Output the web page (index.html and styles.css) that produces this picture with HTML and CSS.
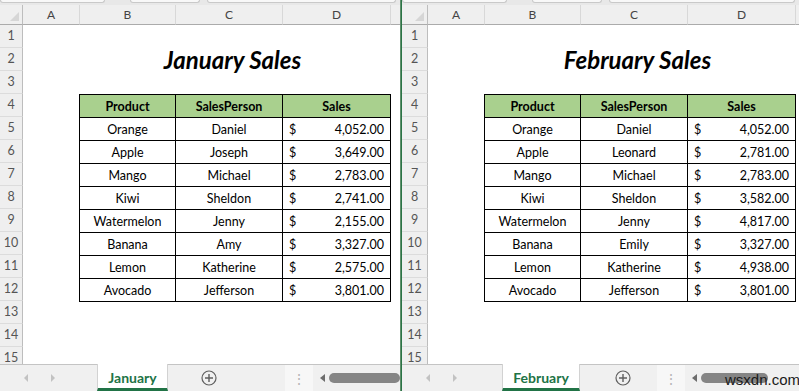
FILE: index.html
```html
<!DOCTYPE html>
<html lang="en">
  <head>
    <meta charset="UTF-8" />
    <meta name="viewport" content="width=device-width, initial-scale=1.0" />
    <title>Sales</title>
    <link rel="stylesheet" href="styles.css">
  </head>
  <body>
    <div class="screen">
      <!-- January window -->
      <section class="pane pane-left">
        <div class="topbar">
          <span class="box box-name"></span>
          <span class="box box-fx"></span>
          <span class="box box-formula"></span>
        </div>
        <div class="grid">
          <div class="ch corner"></div>
          <div class="ch">A</div>
          <div class="ch">B</div>
          <div class="ch">C</div>
          <div class="ch">D</div>
          <div class="ch ch-rest"></div>
          <div class="rn">1</div><div class="rn">2</div><div class="rn">3</div><div class="rn">4</div><div class="rn">5</div>
          <div class="rn">6</div><div class="rn">7</div><div class="rn">8</div><div class="rn">9</div><div class="rn">10</div>
          <div class="rn">11</div><div class="rn">12</div><div class="rn">13</div><div class="rn">14</div><div class="rn">15</div>
          <h1 class="title">January Sales</h1>
          <div class="table">
            <div class="th">Product</div><div class="th">SalesPerson</div><div class="th">Sales</div>
            <div class="td">Orange</div><div class="td">Daniel</div><div class="td money"><span>$</span><span>4,052.00</span></div>
            <div class="td">Apple</div><div class="td">Joseph</div><div class="td money"><span>$</span><span>3,649.00</span></div>
            <div class="td">Mango</div><div class="td">Michael</div><div class="td money"><span>$</span><span>2,783.00</span></div>
            <div class="td">Kiwi</div><div class="td">Sheldon</div><div class="td money"><span>$</span><span>2,741.00</span></div>
            <div class="td">Watermelon</div><div class="td">Jenny</div><div class="td money"><span>$</span><span>2,155.00</span></div>
            <div class="td">Banana</div><div class="td">Amy</div><div class="td money"><span>$</span><span>3,327.00</span></div>
            <div class="td">Lemon</div><div class="td">Katherine</div><div class="td money"><span>$</span><span>2,575.00</span></div>
            <div class="td">Avocado</div><div class="td">Jefferson</div><div class="td money"><span>$</span><span>3,801.00</span></div>
          </div>
        </div>
        <div class="tabbar">
          <div class="nav"><i class="tri tri-l"></i><i class="tri tri-r"></i></div>
          <div class="tab">January</div>
          <div class="add">
            <svg viewBox="0 0 16 16" width="16" height="16">
              <circle cx="8" cy="8" r="7" fill="none" stroke="#5f5f5f" stroke-width="1.2"/>
              <path d="M8 4v8M4 8h8" stroke="#5f5f5f" stroke-width="1.4"/>
            </svg>
          </div>
          <div class="dots">&#8942;</div>
          <div class="hscroll"><i class="sarrow"></i><span class="thumb"></span></div>
        </div>
      </section>

      <div class="split"></div>

      <!-- February window -->
      <section class="pane pane-right">
        <div class="topbar">
          <span class="box box-name"></span>
          <span class="box box-fx"></span>
          <span class="box box-formula"></span>
        </div>
        <div class="grid">
          <div class="ch corner"></div>
          <div class="ch">A</div>
          <div class="ch">B</div>
          <div class="ch">C</div>
          <div class="ch">D</div>
          <div class="ch ch-rest"></div>
          <div class="rn">1</div><div class="rn">2</div><div class="rn">3</div><div class="rn">4</div><div class="rn">5</div>
          <div class="rn">6</div><div class="rn">7</div><div class="rn">8</div><div class="rn">9</div><div class="rn">10</div>
          <div class="rn">11</div><div class="rn">12</div><div class="rn">13</div><div class="rn">14</div><div class="rn">15</div>
          <h1 class="title">February Sales</h1>
          <div class="table">
            <div class="th">Product</div><div class="th">SalesPerson</div><div class="th">Sales</div>
            <div class="td">Orange</div><div class="td">Daniel</div><div class="td money"><span>$</span><span>4,052.00</span></div>
            <div class="td">Apple</div><div class="td">Leonard</div><div class="td money"><span>$</span><span>2,781.00</span></div>
            <div class="td">Mango</div><div class="td">Michael</div><div class="td money"><span>$</span><span>2,783.00</span></div>
            <div class="td">Kiwi</div><div class="td">Sheldon</div><div class="td money"><span>$</span><span>3,582.00</span></div>
            <div class="td">Watermelon</div><div class="td">Jenny</div><div class="td money"><span>$</span><span>4,817.00</span></div>
            <div class="td">Banana</div><div class="td">Emily</div><div class="td money"><span>$</span><span>3,327.00</span></div>
            <div class="td">Lemon</div><div class="td">Katherine</div><div class="td money"><span>$</span><span>4,938.00</span></div>
            <div class="td">Avocado</div><div class="td">Jefferson</div><div class="td money"><span>$</span><span>3,801.00</span></div>
          </div>
        </div>
        <div class="tabbar">
          <div class="nav"><i class="tri tri-l"></i><i class="tri tri-r"></i></div>
          <div class="tab">February</div>
          <div class="add">
            <svg viewBox="0 0 16 16" width="16" height="16">
              <circle cx="8" cy="8" r="7" fill="none" stroke="#5f5f5f" stroke-width="1.2"/>
              <path d="M8 4v8M4 8h8" stroke="#5f5f5f" stroke-width="1.4"/>
            </svg>
          </div>
          <div class="dots">&#8942;</div>
          <div class="hscroll"><i class="sarrow"></i><span class="thumb"></span></div>
        </div>
        <div class="watermark">wsxdn.com</div>
      </section>
    </div>
  </body>
</html>
```
FILE: styles.css
```css
* {
  margin: 0;
  padding: 0;
  box-sizing: border-box;
}
body {
  width: 799px;
  height: 391px;
  overflow: hidden;
  background: #fff;
  font-family: Lato, "Open Sans", sans-serif;
  color: #000;
}
.screen {
  display: flex;
  height: 391px;
}
.pane {
  position: relative;
  display: flex;
  flex-direction: column;
  overflow: hidden;
  background: #fff;
}
.pane-left {
  width: 400px;
  --rh: 23px;
  --nav: 97px;
  --tab: 71px;
  --add-w: 117px;
  --add-pad: 33px;
}
.pane-right {
  width: 397px;
  --rh: 26px;
  --nav: 100px;
  --tab: 78px;
  --add-w: 77px;
  --add-pad: 35px;
}
.split {
  width: 2px;
  background: #2b7446;
  border-left: 1px solid #5f8f6c;
}

/* formula bar remains */
.topbar {
  height: 5px;
  display: flex;
  background: #e8e8e8;
}
.box {
  height: 3px;
  background: #f8f8f8;
  border: 1px solid #c9c9c9;
  border-top: 0;
  border-radius: 0 0 3px 3px;
}
.box-name { width: 105px; }
.box-fx { width: 70px; margin-left: 25px; }
.box-formula { flex: 1; margin-left: 7px; margin-right: 4px; }

/* sheet */
.grid {
  flex: 1;
  display: grid;
  grid-template-columns: var(--rh) 57px 96px 107px 108px 1fr;
  grid-template-rows: 20px repeat(15, 23px);
  overflow: hidden;
}
.ch {
  background: #efefef;
  border-bottom: 1px solid #ababab;
  border-right: 1px solid #d8d8d8;
  font-size: 12px;
  line-height: 19px;
  text-align: center;
  color: #444;
}
.ch-rest {
  border-right: 0;
}
.corner {
  position: relative;
  border-right: 1px solid #bdbdbd;
}
.corner::after {
  content: "";
  position: absolute;
  right: 3px;
  bottom: 3px;
  border-left: 9px solid transparent;
  border-bottom: 9px solid #d6d6d6;
}
.rn {
  grid-column: 1;
  background: #efefef;
  border-right: 1px solid #bdbdbd;
  border-bottom: 1px solid #dcdcdc;
  font-size: 12.5px;
  line-height: 22px;
  text-align: center;
  color: #555;
}
.title {
  grid-column: 3 / 6;
  grid-row: 3;
  display: flex;
  align-items: center;
  justify-content: center;
  font-size: 24px;
  font-weight: 700;
  font-style: italic;
  padding-right: 6px;
}
.table {
  grid-column: 3 / 6;
  grid-row: 5 / 14;
  align-self: start;
  display: grid;
  grid-template-columns: 96px 107px 108px;
  grid-auto-rows: 23px;
  border-left: 1px solid #000;
  border-top: 1px solid #000;
  margin-left: -1px;
  width: 312px;
}
.th,
.td {
  border-right: 1px solid #000;
  border-bottom: 1px solid #000;
  display: flex;
  align-items: center;
  justify-content: center;
  font-size: 12.5px;
}
.th {
  background: #a9d08e;
  font-weight: 700;
}
.money {
  justify-content: space-between;
  padding: 0 6px 0 6px;
}

/* sheet tabs */
.tabbar {
  height: 27px;
  flex: none;
  display: flex;
  background: #f0f0f0;
  border-top: 1px solid #c4c4c4;
}
.nav {
  width: var(--nav);
  display: flex;
  align-items: center;
  gap: 23px;
  padding-left: 24px;
}
.tri {
  width: 0;
  height: 0;
  border-top: 4px solid transparent;
  border-bottom: 4px solid transparent;
}
.tri-l { border-right: 4px solid #c2c2c2; }
.tri-r { border-left: 4px solid #c2c2c2; }
.tab {
  width: var(--tab);
  margin-top: -1px;
  background: #fff;
  border-left: 1px solid #d2d2d2;
  border-right: 1px solid #d2d2d2;
  border-bottom: 3px solid #217346;
  color: #217346;
  font-size: 14px;
  font-weight: 700;
  display: flex;
  align-items: center;
  justify-content: center;
  padding-top: 2px;
}
.add {
  width: var(--add-w);
  display: flex;
  align-items: center;
  padding-left: var(--add-pad);
}
.dots {
  width: 28px;
  background: #f7f7f7;
  color: #b5b5b5;
  font-size: 14px;
  display: flex;
  align-items: center;
  justify-content: center;
}
.hscroll {
  flex: 1;
  display: flex;
  align-items: center;
  padding-left: 7px;
}
.sarrow {
  width: 0;
  height: 0;
  border-top: 4px solid transparent;
  border-bottom: 4px solid transparent;
  border-right: 5px solid #6c6c6c;
}
.thumb {
  height: 10px;
  margin-left: 4px;
  border-radius: 5px;
  background: #858585;
  flex: 1;
}
.pane-right .thumb {
  flex: none;
  width: 67px;
}
.watermark {
  position: absolute;
  left: 323px;
  bottom: 3px;
  font-family: "Liberation Sans", Arial, sans-serif;
  font-size: 15px;
  color: #1a1a1a;
}
```
